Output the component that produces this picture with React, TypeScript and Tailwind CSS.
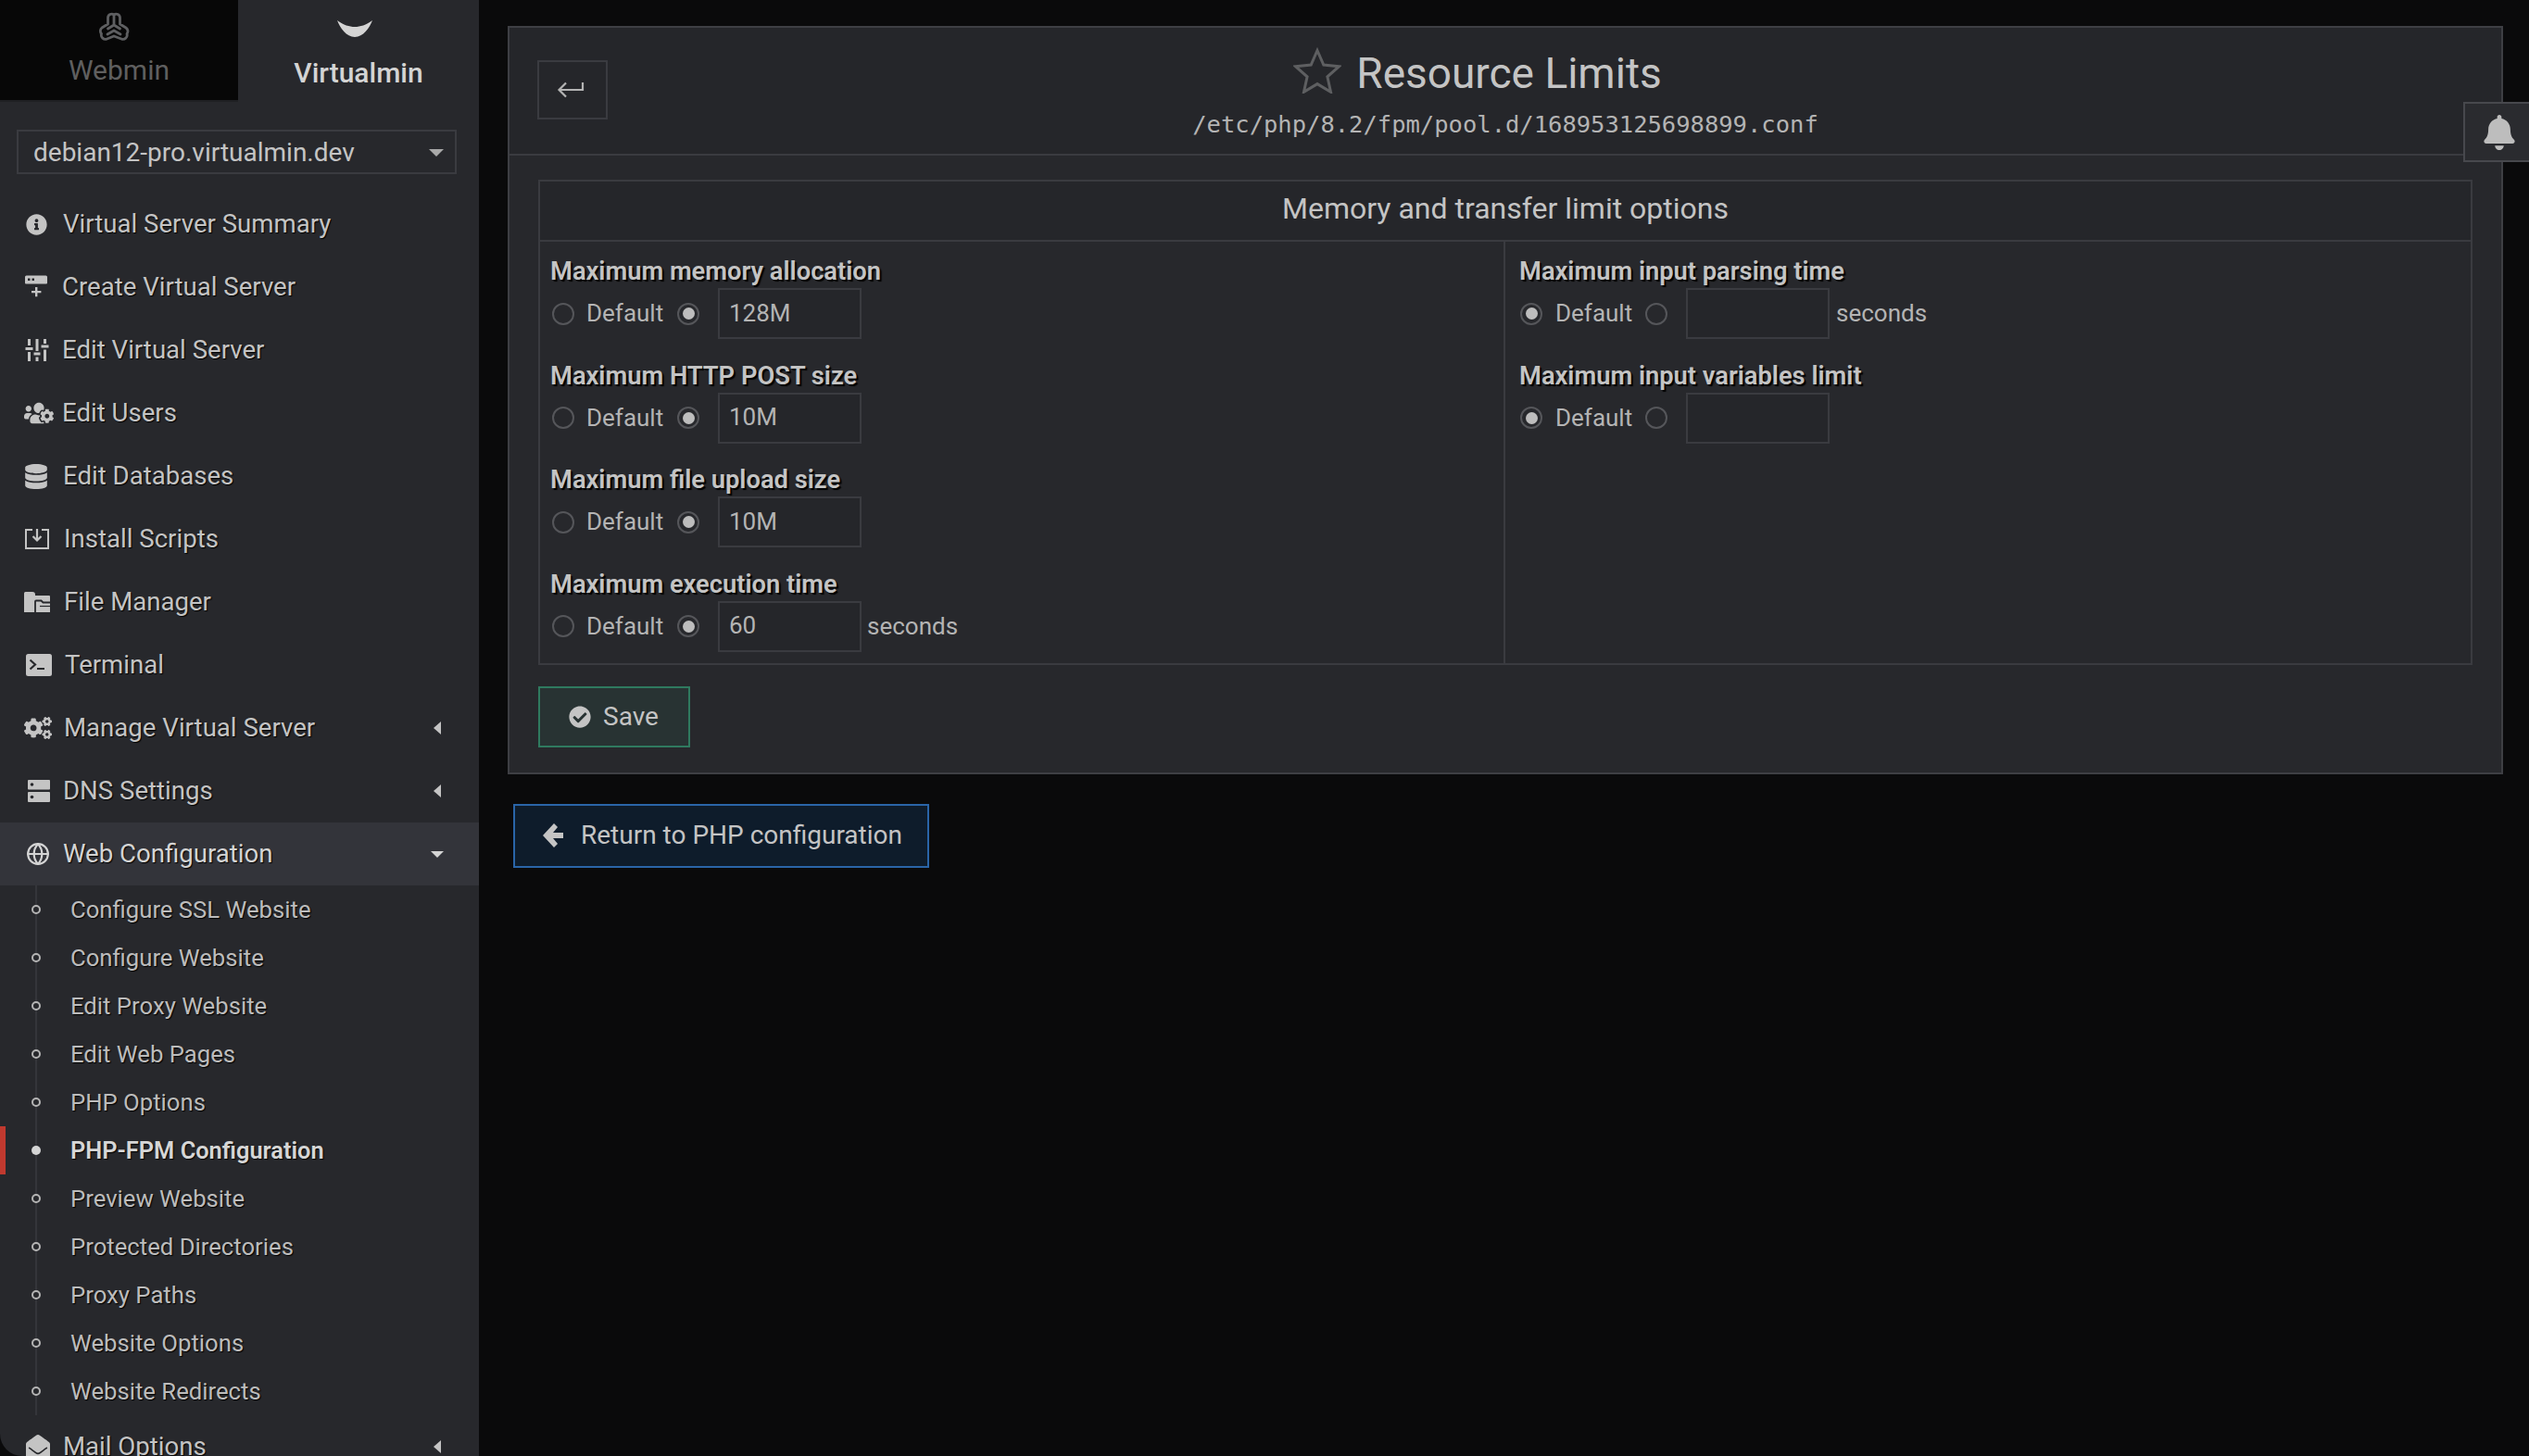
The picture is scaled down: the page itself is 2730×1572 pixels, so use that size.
import type { FC, ReactNode } from "react";
import { FaBell, FaCheckCircle, FaCogs, FaDatabase, FaEnvelopeOpen, FaInfoCircle, FaUsersCog } from "react-icons/fa";
import { Globe } from "lucide-react";

const CreateServerIcon = () => (
  <svg viewBox="0 0 26 26" className="h-[26px] w-[26px]" fill="currentColor">
    <path d="M1 2a1.5 1.5 0 0 1 1.5-1.5h21A1.5 1.5 0 0 1 25 2v6.5a1 1 0 0 1-1 1H2a1 1 0 0 1-1-1z" />
    <rect x="4" y="3.5" width="2.5" height="2.5" fill="#27282c" />
    <rect x="8.5" y="3.5" width="2.5" height="2.5" fill="#27282c" />
    <path d="M12 13h2.4v4h4v2.2h-4v4H12v-4H8V17h4z" />
  </svg>
);

const SlidersIcon = () => (
  <svg viewBox="0 0 26 26" className="h-[26px] w-[26px]" fill="currentColor">
    <rect x="3" y="1" width="3" height="7" />
    <rect x="0.5" y="10" width="8" height="3" />
    <rect x="3" y="15" width="3" height="10" />
    <rect x="11.5" y="1" width="3" height="13" />
    <rect x="9.5" y="15.5" width="7" height="3" />
    <rect x="11.5" y="20.5" width="3" height="4.5" />
    <rect x="20" y="1" width="3" height="5" />
    <rect x="17.5" y="7.5" width="8" height="3" />
    <rect x="20" y="12.5" width="3" height="12.5" />
  </svg>
);

const InstallIcon = () => (
  <svg viewBox="0 0 28 24" className="h-[24px] w-[28px]" fill="none" stroke="currentColor" strokeWidth="2">
    <path d="M9 2H2v20h24V2h-7" />
    <path d="M14 1v12M9.5 9l4.500 4.500L18.500 9" strokeWidth="2.2" />
  </svg>
);

const FilesIcon = () => (
  <svg viewBox="0 0 28 22" className="h-[22px] w-[28px]" fill="currentColor">
    <path d="M0 1.500A1.500 1.500 0 0 1 1.500 0H9a3 3 0 0 1 3 3v1h15a1 1 0 0 1 1 1v17H0z" />
    <path d="M12 22V10.500a1 1 0 0 1 1-1h5.500l2 2H28" fill="none" stroke="#27282c" strokeWidth="1.800" />
    <path d="M17 15.500h11" fill="none" stroke="#27282c" strokeWidth="1.200" />
  </svg>
);

const TerminalIcon = () => (
  <svg viewBox="0 0 28 24" className="h-[24px] w-[28px]" fill="currentColor">
    <rect width="28" height="24" rx="2.500" />
    <path d="M4.500 6.500l5.500 5-5.500 5" fill="none" stroke="#27282c" strokeWidth="2.200" />
    <rect x="12" y="15" width="8" height="2" fill="#27282c" />
  </svg>
);

const DnsIcon = () => (
  <svg viewBox="0 0 24 24" className="h-[24px] w-[24px]" fill="currentColor">
    <rect width="24" height="10.500" rx="1" />
    <rect y="13" width="24" height="11" rx="1" />
    <circle cx="4.500" cy="5" r="1.800" fill="#27282c" />
    <circle cx="4.500" cy="18.500" r="1.800" fill="#27282c" />
  </svg>
);

const WebminLogo = () => (
  <svg viewBox="0 0 34 32" className="h-[32px] w-[34px]" fill="none" stroke="#5e5f61" strokeWidth="2.800" strokeLinejoin="round" strokeLinecap="round">
    <path d="M10.500 13V6a4 4 0 0 1 6.500-3 4 4 0 0 1 6.500 3v7l6.500 4a4.500 4.500 0 0 1 1 6.500 4.500 4.500 0 0 1-6 5.500L17 26l-7.500 3a4.500 4.500 0 0 1-6-5.500A4.500 4.500 0 0 1 4 17z" />
    <path d="M17 3v11M17 14l-6.500 4M17 14l6.500 4M10 24l7-4 7 4" />
  </svg>
);

const VirtualminLogo = () => (
  <svg viewBox="0 0 38 20" className="h-[20px] w-[38px]" fill="#d4d4d4">
    <path d="M0 1c7 5 13 7 19 7s12-2 19-7c-3 8-10 18-19 18S3 9 0 1z" />
  </svg>
);

type MenuItem = { label: string; icon: ReactNode; iconBox: string; arrow?: boolean };

const menuItems: MenuItem[] = [
  { label: "Virtual Server Summary", icon: <FaInfoCircle className="h-[23px] w-[23px]" />, iconBox: "w-[42px] pl-[2px]" },
  { label: "Create Virtual Server", icon: <CreateServerIcon />, iconBox: "w-[41px]" },
  { label: "Edit Virtual Server", icon: <SlidersIcon />, iconBox: "w-[41px] pl-[1px]" },
  { label: "Edit Users", icon: <FaUsersCog className="h-[26px] w-[32px]" />, iconBox: "w-[41px]" },
  { label: "Edit Databases", icon: <FaDatabase className="h-[27px] w-[24px]" />, iconBox: "w-[42px] pl-[1px]" },
  { label: "Install Scripts", icon: <InstallIcon />, iconBox: "w-[43px]" },
  { label: "File Manager", icon: <FilesIcon />, iconBox: "w-[43px]" },
  { label: "Terminal", icon: <TerminalIcon />, iconBox: "w-[44px] pl-[2px]" },
  { label: "Manage Virtual Server", icon: <FaCogs className="h-[26px] w-[30px]" />, iconBox: "w-[43px]", arrow: true },
  { label: "DNS Settings", icon: <DnsIcon />, iconBox: "w-[42px] pl-[4px]", arrow: true },
];

const subItems = [
  "Configure SSL Website",
  "Configure Website",
  "Edit Proxy Website",
  "Edit Web Pages",
  "PHP Options",
  "PHP-FPM Configuration",
  "Preview Website",
  "Protected Directories",
  "Proxy Paths",
  "Website Options",
  "Website Redirects",
];

const NavRow: FC<{ item: MenuItem }> = ({ item }) => (
  <div className="flex h-[68px] items-center pl-[26px] pr-[41px] text-[27.6px] text-[#c4c4c4] [text-shadow:1px_1px_1px_#000]">
    <span className={`flex shrink-0 items-center ${item.iconBox}`}>{item.icon}</span>
    <span className="flex-1">{item.label}</span>
    {item.arrow ? <span className="h-0 w-0 border-y-[7px] border-r-[8px] border-y-transparent border-r-[#c4c4c4]" /> : null}
  </div>
);

const Sidebar = () => (
  <aside className="flex h-[1572px] w-[517px] shrink-0 flex-col overflow-hidden rounded-bl-[24px] bg-[#27282c]">
    <div className="flex h-[110px] shrink-0">
      <div className="flex h-[110px] w-[257px] flex-col items-center border-b-[2px] border-[#1f2023] bg-[#070707] pt-[13px]">
        <span className="mr-[12px] flex">
          <WebminLogo />
        </span>
        <span className="mt-[11px] text-[30px] leading-[40px] text-[#5f5f5f]">Webmin</span>
      </div>
      <div className="flex flex-1 flex-col items-center pt-[21px]">
        <span className="mr-[8px] flex">
          <VirtualminLogo />
        </span>
        <span className="mt-[18px] text-[30px] font-medium leading-[40px] text-[#d4d4d4]">Virtualmin</span>
      </div>
    </div>
    <div className="ml-[18px] mr-[24px] mt-[30px] flex h-[48px] shrink-0 items-center justify-between border-[2px] border-[#3a3b40] pl-[16px] pr-[12px] pt-[1px] text-[28px] text-[#c4c4c4]">
      <span>debian12-pro.virtualmin.dev</span>
      <span className="h-0 w-0 border-x-[8px] border-t-[8px] border-x-transparent border-t-[#a9a9a9]" />
    </div>
    <nav className="mt-[20px] flex flex-col">
      {menuItems.map((item) => (
        <NavRow key={item.label} item={item} />
      ))}
      <div className="flex h-[68px] shrink-0 items-center bg-[#33343a] pl-[28px] pr-[38px] text-[27.6px] text-[#d4d4d4] [text-shadow:1px_1px_1px_#000]">
        <span className="flex w-[40px] shrink-0 items-center">
          <Globe className="h-[26px] w-[26px]" strokeWidth={2} />
        </span>
        <span className="flex-1">Web Configuration</span>
        <span className="h-0 w-0 border-x-[7px] border-t-[7px] border-x-transparent border-t-[#d4d4d4]" />
      </div>
      <div className="relative flex flex-col">
        <span className="absolute bottom-0 left-[38px] top-0 w-[2px] bg-[#34353a]" />
        {subItems.map((label) => {
          const active = label === "PHP-FPM Configuration";
          return (
            <div key={label} className="relative flex h-[52px] items-center pl-[76px] text-[25.7px] [text-shadow:1px_1px_1px_#000]">
              {active ? <span className="absolute left-0 top-0 h-[52px] w-[6px] bg-[#c0392f]" /> : null}
              <span
                className={
                  active
                    ? "absolute left-[34px] h-[10px] w-[10px] rounded-full bg-[#d4d4d4]"
                    : "absolute left-[34px] h-[10px] w-[10px] rounded-full border-[2px] border-[#b4b4b4] bg-[#27282c]"
                }
              />
              <span className={active ? "text-[25.4px] font-semibold text-[#d6d6d6]" : "text-[#bcbcbc]"}>{label}</span>
            </div>
          );
        })}
      </div>
      <NavRow item={{ label: "Mail Options", icon: <FaEnvelopeOpen className="h-[26px] w-[26px]" />, iconBox: "w-[42px] pl-[2px]", arrow: true }} />
    </nav>
  </aside>
);

const Radio: FC<{ checked?: boolean }> = ({ checked }) => (
  <span className="flex h-[24px] w-[24px] shrink-0 items-center justify-center rounded-full border-[2px] border-[#55565a]">
    {checked ? <span className="h-[13px] w-[13px] rounded-full bg-[#bdbdbd]" /> : null}
  </span>
);

type FieldProps = { label: string; value?: string; useDefault?: boolean; suffix?: string };

const Field: FC<FieldProps> = ({ label, value = "", useDefault, suffix }) => (
  <div className="h-[112.5px]">
    <div className="pt-[2px] text-[27.3px] font-semibold leading-[32px] text-[#c4c4c4] [text-shadow:2px_2px_1px_#000]">{label}</div>
    <div className={`mt-[2px] flex h-[55px] items-center text-[26px] text-[#b4b4b4] ${useDefault ? "pl-[1px]" : "pl-[2px]"}`}>
      <Radio checked={useDefault} />
      <span className={useDefault ? "ml-[14px] w-[97px]" : "ml-[13px] w-[98px]"}>Default</span>
      <Radio checked={!useDefault} />
      <input
        readOnly
        defaultValue={value}
        className={`h-[55px] w-[155px] border-[2px] border-[#3a3b40] bg-[#25262a] pb-[2px] pl-[10px] text-[26px] text-[#b4b4b4] outline-none ${useDefault ? "ml-[20px]" : "ml-[20px]"}`}
      />
      {suffix ? <span className={useDefault ? "ml-[7px]" : "ml-[6px]"}>{suffix}</span> : null}
    </div>
  </div>
);

const App = () => (
  <div className="relative flex h-[1572px] w-[2730px] overflow-hidden bg-[#0a0a0b] font-['Roboto',sans-serif]">
    <Sidebar />
    <main className="flex-1 pl-[31px] pr-[28px] pt-[28px]">
      <section className="h-[808px] border-[2px] border-[#3e3f44] bg-[#27282c]">
        <header className="relative flex h-[138px] flex-col items-center border-b-[2px] border-[#3a3b40] bg-[#25262a]">
          <button
            type="button"
            className="absolute left-[30px] top-[35px] flex h-[64px] w-[76px] items-center justify-center border-[2px] border-[#3a3b40] pr-[5px] text-[#b4b4b4]"
          >
            <svg viewBox="0 0 30 20" className="h-[20px] w-[30px]" fill="none" stroke="currentColor" strokeWidth="2.200">
              <path d="M28 2v8H3M10 2.500L2.500 10l7.500 7.500" />
            </svg>
          </button>
          <div className="mr-[60px] mt-[21px] flex items-center">
            <svg viewBox="0 0 52 50" className="mb-[6px] h-[50px] w-[52px]" fill="none" stroke="#5e5f61" strokeWidth="3">
              <path d="M26 3.500l6.800 15.500 16.700 1.700-12.600 11.200 3.600 16.400L26 39.600l-14.500 8.700 3.600-16.400L2.500 20.700 19.200 19z" />
            </svg>
            <h1 className="ml-[16px] text-[46px] leading-[54px] text-[#c4c4c4]">Resource Limits</h1>
          </div>
          <div className="mt-[11px] font-['DejaVu_Sans_Mono',monospace] text-[25.5px] leading-[32px] text-[#b4b4b4]">
            /etc/php/8.2/fpm/pool.d/168953125698899.conf
          </div>
        </header>
        <div className="px-[31px] pt-[26px]">
          <div className="h-[524px] border-[2px] border-[#3a3b40] bg-[#25262a]">
            <div className="flex h-[65px] items-center justify-center border-b-[2px] border-[#3a3b40] pb-[5px] text-[32px] text-[#c4c4c4]">
              Memory and transfer limit options
            </div>
            <div className="flex h-[455px] bg-[#27282c]">
              <div className="w-[1042px] border-r-[2px] border-[#3a3b40] pl-[11px] pt-[14px]">
                <Field label="Maximum memory allocation" value="128M" />
                <Field label="Maximum HTTP POST size" value="10M" />
                <Field label="Maximum file upload size" value="10M" />
                <Field label="Maximum execution time" value="60" suffix="seconds" />
              </div>
              <div className="flex-1 pl-[15px] pt-[14px]">
                <Field label="Maximum input parsing time" useDefault suffix="seconds" />
                <Field label="Maximum input variables limit" useDefault />
              </div>
            </div>
          </div>
          <button
            type="button"
            className="mt-[23px] flex h-[66px] w-[164px] items-center border-[2px] border-[#2f7a5f] bg-[#283333] pl-[31px] text-[28px] text-[#c4c4c4]"
          >
            <FaCheckCircle className="h-[24px] w-[24px]" />
            <span className="ml-[13px]">Save</span>
          </button>
        </div>
      </section>
      <button
        type="button"
        className="ml-[6px] mt-[32px] flex h-[69px] w-[449px] items-center border-[2px] border-[#2a65a8] bg-[#0e1c2b] pb-[2px] pl-[29px] text-[28px] text-[#c4c4c4]"
      >
        <svg viewBox="0 0 24 28" className="h-[28px] w-[24px]" fill="currentColor">
          <path d="M13 1l4 4-5 6h11v6H12l5 6-4 4L1 14z" />
        </svg>
        <span className="ml-[18px]">Return to PHP configuration</span>
      </button>
    </main>
    <div className="absolute right-0 top-[110px] flex h-[65px] w-[71px] items-center justify-center border-[2px] border-r-0 border-[#47484d] bg-[#2a2b2f] pl-[4px] text-[#bdbdbd]">
      <FaBell className="h-[38px] w-[36px]" />
    </div>
  </div>
);

export default App;
